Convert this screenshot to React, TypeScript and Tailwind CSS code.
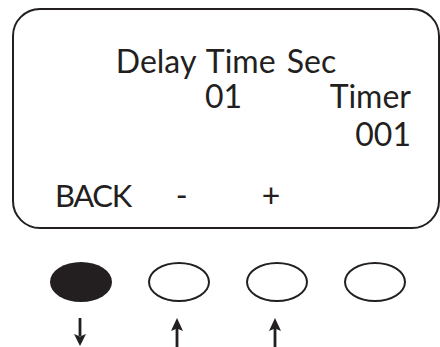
const ink = '#231f20';

const Oval = ({ filled }: { filled?: boolean }) => (
  <div
    className={
      filled
        ? 'w-[62px] h-[40px] rounded-[50%] bg-[#231f20]'
        : 'w-[62px] h-[40px] rounded-[50%] border-[2.5px] border-[#231f20]'
    }
  />
);

const Arrow = ({ up }: { up?: boolean }) => (
  <svg width="14" height="30" viewBox="0 0 14 30" className="block">
    {up ? (
      <>
        <path d="M7 0 L13 13 L7 10.5 L1 13 Z" fill={ink} />
        <rect x="5.6" y="10" width="2.8" height="20" fill={ink} />
      </>
    ) : (
      <>
        <rect x="5.6" y="0" width="2.8" height="18" fill={ink} />
        <path d="M7 28 L13 16 L7 18.5 L1 16 Z" fill={ink} />
      </>
    )}
  </svg>
);

export default function App() {
  return (
    <div
      className="w-[440px] h-[347px] overflow-hidden bg-white text-[#231f20]"
      style={{ fontFamily: 'Lato, sans-serif' }}
    >
      <div className="ml-[12px] mt-[8px] w-[428px] h-[221px] rounded-[28px] border-2 border-[#231f20] flex flex-col text-[32px] leading-[35px] [word-spacing:3px]">
        <div className="mt-[33px] text-center">Delay Time Sec</div>
        <div className="flex">
          <span className="ml-[191px]">01</span>
          <span className="ml-auto mr-[27px]">Timer</span>
        </div>
        <div className="text-right mr-[27px] mt-[3px]">001</div>
        <div className="mt-auto mb-[14px] flex items-baseline">
          <span className="ml-[41px] text-[31px] tracking-[-1.4px]">BACK</span>
          <span className="ml-[45px]">-</span>
          <span className="ml-[74px]">+</span>
        </div>
      </div>
      <div className="flex items-start ml-[50px] mt-[33px] gap-[36px]">
        <Oval filled />
        <Oval />
        <Oval />
        <Oval />
      </div>
      <div className="flex items-start mt-[16px]">
        <div className="ml-[73px]"><Arrow /></div>
        <div className="ml-[83px]"><Arrow up /></div>
        <div className="ml-[84px]"><Arrow up /></div>
      </div>
    </div>
  );
}
